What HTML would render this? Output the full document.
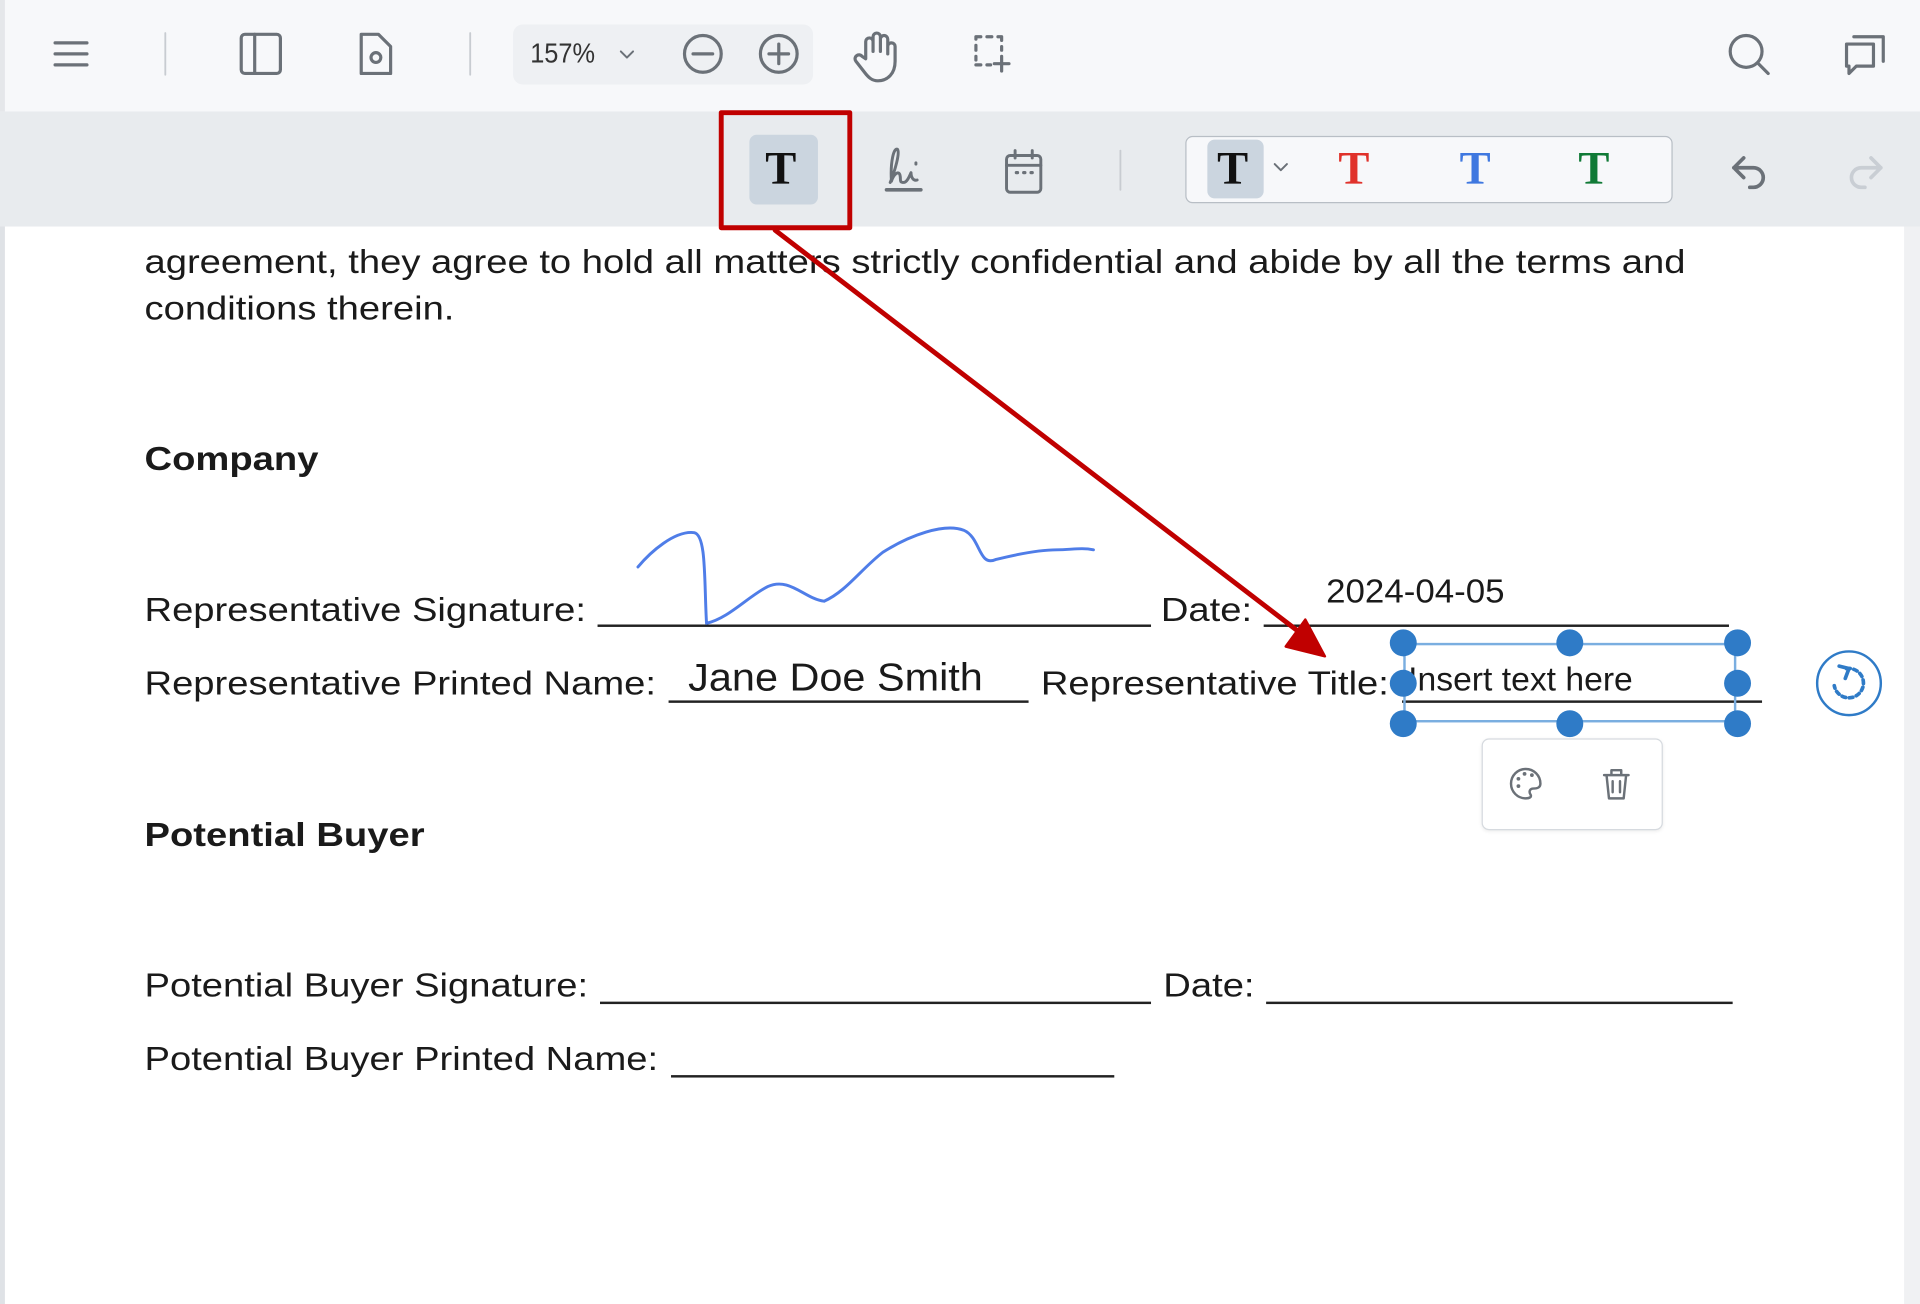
<!DOCTYPE html>
<html><head><meta charset="utf-8"><style>
html,body{margin:0;padding:0;width:1920px;height:1304px;overflow:hidden;background:#fff}
#s{position:absolute;left:0;top:0;width:1568px;height:1065px;transform:scale(1.22449);transform-origin:0 0;font-family:"Liberation Sans",Arial,sans-serif;color:#1a1a1a}
.a{position:absolute;white-space:nowrap}
.t{font-size:27.5px;line-height:32px}
.w{transform:scaleX(1.134);transform-origin:0 0}
.u{position:absolute;height:0;border-top:2px solid #222}
.b{font-weight:bold}
.T{font-family:"Liberation Serif",serif;font-weight:bold;font-size:38px;line-height:40px}
.h{position:absolute;width:22px;height:22px;border-radius:50%;background:#2f7bc7}
</style></head><body><div id="s">
<div class="a" style="left:0;top:0;width:1568px;height:91px;background:#f7f8fa"></div>
<div class="a" style="left:0;top:91px;width:1568px;height:94px;background:#e8ebee"></div>
<div class="a" style="left:0;top:185px;width:4px;height:880px;background:#dfe2e6"></div>
<div class="a" style="left:0;top:0;width:4px;height:91px;background:#e5e7ea"></div>
<div class="a" style="left:1555px;top:185px;width:13px;height:880px;background:#f0f1f3"></div>

<svg class="a" style="left:0;top:0" width="1568" height="91" fill="none" stroke="#6b7178" stroke-width="2.6" stroke-linecap="round" stroke-linejoin="round">
<path d="M45 35h26M45 44h26M45 53h26"/>
<path d="M135 27v34M384 27v34" stroke="#c8ccd1" stroke-width="1.5"/>
<rect x="197" y="28" width="32" height="32" rx="3"/><path d="M208 28v32"/>
<path d="M295 28h14l10 10v22h-24z"/><circle cx="307" cy="47" r="4"/>
<rect x="419" y="20" width="245" height="49" rx="8" fill="#eef0f3" stroke="none"/>
<path d="M507 42l5 5 5-5" stroke-width="1.6"/>
<circle cx="574" cy="44" r="15"/><path d="M566 44h16"/>
<circle cx="636" cy="44" r="15"/><path d="M628 44h16M636 36v16"/>
<path d="M707 48v-14a3 3 0 0 1 6 0v8v-12a3 3 0 0 1 6 0v12v-10a3 3 0 0 1 6 0v12v-6a3 3 0 0 1 6 0v12c0 10-6 16-14 16c-5 0-8-3-11-7l-7-9a3 3 0 0 1 5-4z"/>
<path d="M797 32v-2h4M806 30h4M815 30h3v3M818 38v3M797 37v4M797 46v3M797 53h4M806 53h3"/>
<path d="M818 46v12M812 52h12"/>
<circle cx="1426" cy="42" r="13"/><path d="M1436 52l8 8"/>
<path d="M1508 36h22v18h-14l-6 6v-6h-2z"/><path d="M1514 30h24v20"/>
</svg>
<div class="a" style="left:433px;top:30px;font-size:23px;color:#333;transform:scaleX(0.9);transform-origin:0 0">157%</div>

<div class="a" style="left:612px;top:110px;width:56px;height:57px;background:#cbd5df;border-radius:6px"></div>
<div class="a T" style="left:625px;top:118px;color:#111">T</div>
<div class="a" style="left:968px;top:111px;width:396px;height:53px;border:1.5px solid #b8bec5;background:#f7f8fa;border-radius:6px"></div>
<div class="a" style="left:986px;top:114px;width:46px;height:48px;background:#cbd5df;border-radius:6px"></div>
<div class="a T" style="left:994px;top:118px;color:#111">T</div>
<div class="a T" style="left:1093px;top:118px;color:#e0322b">T</div>
<div class="a T" style="left:1192px;top:118px;color:#3f78e0">T</div>
<div class="a T" style="left:1289px;top:118px;color:#107a36">T</div>
<svg class="a" style="left:0;top:91px" width="1568" height="94" fill="none" stroke="#6b7178" stroke-width="2.4" stroke-linecap="round" stroke-linejoin="round">
<path d="M724 64h28" stroke-width="3"/>
<path d="M727 58c4-10 8-24 6-27c-3-2-6 10-5 26c2-6 6-9 7-5c1 4-1 6 3 6c3 0 5-6 6-8c0 4 2 7 5 6M748 42v1"/>
<rect x="822" y="36" width="28" height="30" rx="3"/><path d="M822 44h28M829 32v6M843 32v6"/><path d="M830 50h1M836 50h1M842 50h1" stroke-width="2.6"/>
<path d="M915 32v32" stroke="#c8ccd1" stroke-width="1.5"/>
<path d="M1041 43l5 5 5-5" stroke-width="1.6"/>
<path d="M1424 38l-8 8 8 8M1416 46h16a8 8 0 0 1 0 16h-3" stroke-width="3"/>
<path d="M1528 38l8 8-8 8M1536 46h-16a8 8 0 0 0 0 16h3" stroke="#c9ced4" stroke-width="3"/>
</svg>

<div class="a t w" style="left:118px;top:198px">agreement, they agree to hold all matters strictly confidential and abide by all the terms and</div>
<div class="a t w" style="left:118px;top:236px">conditions therein.</div>
<div class="a t b w" style="left:118px;top:359px">Company</div>
<div class="a t w" style="left:118px;top:482px">Representative Signature:</div>
<div class="u" style="left:488px;top:510px;width:452px"></div>
<div class="a t w" style="left:948px;top:482px">Date:</div>
<div class="u" style="left:1032px;top:510px;width:380px"></div>
<div class="a t" style="left:1083px;top:467px;transform:scaleX(1.036);transform-origin:0 0">2024-04-05</div>
<div class="a t w" style="left:118px;top:542px">Representative Printed Name:</div>
<div class="u" style="left:546px;top:572px;width:294px"></div>
<div class="a" style="left:562px;top:535px;font-size:32px;transform:scaleX(1.057);transform-origin:0 0">Jane Doe Smith</div>
<div class="a t w" style="left:850px;top:542px">Representative Title:</div>
<div class="u" style="left:1145px;top:572px;width:294px"></div>
<div class="a t" style="left:1150px;top:539px">Insert text here</div>
<div class="a t b w" style="left:118px;top:666px">Potential Buyer</div>
<div class="a t w" style="left:118px;top:789px">Potential Buyer Signature:</div>
<div class="u" style="left:490px;top:818px;width:450px"></div>
<div class="a t w" style="left:950px;top:789px">Date:</div>
<div class="u" style="left:1034px;top:818px;width:381px"></div>
<div class="a t w" style="left:118px;top:849px">Potential Buyer Printed Name:</div>
<div class="u" style="left:548px;top:878px;width:362px"></div>

<div class="a" style="left:1146px;top:525px;width:272px;height:65px;border:2px solid #7aaee0;box-sizing:border-box"></div>
<div class="h" style="left:1135px;top:514px"></div><div class="h" style="left:1271px;top:514px"></div><div class="h" style="left:1408px;top:514px"></div>
<div class="h" style="left:1135px;top:547px"></div><div class="h" style="left:1408px;top:547px"></div>
<div class="h" style="left:1135px;top:580px"></div><div class="h" style="left:1271px;top:580px"></div><div class="h" style="left:1408px;top:580px"></div>
<div class="a" style="left:1210px;top:603px;width:146px;height:73px;border:1.5px solid #d6dadf;border-radius:6px;background:#fff;box-shadow:0 1px 3px rgba(0,0,0,.08)"></div>

<svg class="a" style="left:0;top:0" width="1568" height="1065" fill="none" stroke-linecap="round" stroke-linejoin="round">
<path d="M521 463c10-12 30-30 46-28c10 2 8 40 10 74c18-4 34-22 50-30c18-8 30 10 46 12c18-8 30-26 48-40c22-14 50-24 66-18c14 6 12 30 26 24c16-4 36-8 50-8c12 0 20-2 30 0" stroke="#4f7de8" stroke-width="2.4"/>
<g stroke="#6b7178" stroke-width="2">
<path d="M1246 652a12 12 0 1 1 12-12c0 4-4 4-6 4s-4 2-2 5c1 2-1 3-4 3z"/>
<path d="M1240 636h.1M1245 632h.1M1251 633h.1M1240 642h.1" stroke-width="3"/>
<path d="M1310 633h20M1316 633v-4h8v4M1312 633l2 19h12l2-19M1317 638v9M1323 638v9"/>
</g>
<circle cx="1510" cy="558" r="26" stroke="#2f7bc7" stroke-width="2" fill="#fff"/>
<path d="M1508 546a12 12 0 1 1-10 14" stroke="#2f7bc7" stroke-width="3" stroke-dasharray="3 3"/>
<path d="M1502 544l8 2-3 8" stroke="#2f7bc7" stroke-width="3"/>
<rect x="589" y="92" width="105" height="94" stroke="#c00000" stroke-width="4"/>
<path d="M633 188L1066 520" stroke="#c00000" stroke-width="4"/>
<path d="M1082 536l-32-8 16-22z" fill="#c00000" stroke="#c00000" stroke-width="2"/>
</svg>
</div></body></html>
